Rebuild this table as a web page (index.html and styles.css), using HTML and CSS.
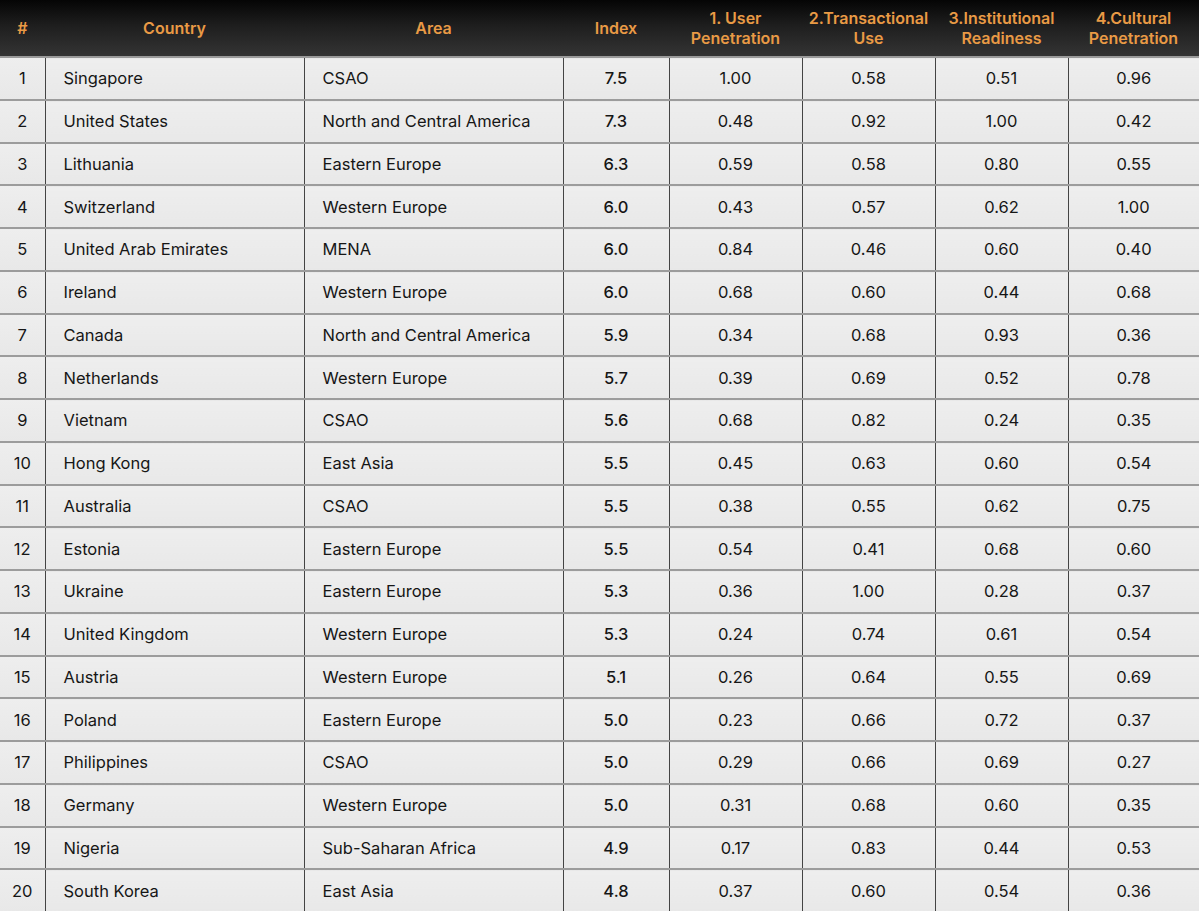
FILE: index.html
```html
<!DOCTYPE html>
<html>
<head>
<meta charset="utf-8">
<link rel="stylesheet" href="styles.css">
</head>
<body>
<table class="rank">
<colgroup>
<col class="c-num"><col class="c-country"><col class="c-area"><col class="c-index"><col class="c-m"><col class="c-m"><col class="c-m"><col class="c-last">
</colgroup>
<thead>
<tr>
<th>#</th><th>Country</th><th>Area</th><th>Index</th><th>1. User<br>Penetration</th><th>2.Transactional<br>Use</th><th>3.Institutional<br>Readiness</th><th>4.Cultural<br>Penetration</th>
</tr>
</thead>
<tbody>
<tr><td>1</td><td class="l">Singapore</td><td class="l">CSAO</td><td class="idx">7.5</td><td>1.00</td><td>0.58</td><td>0.51</td><td>0.96</td></tr>
<tr><td>2</td><td class="l">United States</td><td class="l">North and Central America</td><td class="idx">7.3</td><td>0.48</td><td>0.92</td><td>1.00</td><td>0.42</td></tr>
<tr><td>3</td><td class="l">Lithuania</td><td class="l">Eastern Europe</td><td class="idx">6.3</td><td>0.59</td><td>0.58</td><td>0.80</td><td>0.55</td></tr>
<tr><td>4</td><td class="l">Switzerland</td><td class="l">Western Europe</td><td class="idx">6.0</td><td>0.43</td><td>0.57</td><td>0.62</td><td>1.00</td></tr>
<tr><td>5</td><td class="l">United Arab Emirates</td><td class="l">MENA</td><td class="idx">6.0</td><td>0.84</td><td>0.46</td><td>0.60</td><td>0.40</td></tr>
<tr><td>6</td><td class="l">Ireland</td><td class="l">Western Europe</td><td class="idx">6.0</td><td>0.68</td><td>0.60</td><td>0.44</td><td>0.68</td></tr>
<tr><td>7</td><td class="l">Canada</td><td class="l">North and Central America</td><td class="idx">5.9</td><td>0.34</td><td>0.68</td><td>0.93</td><td>0.36</td></tr>
<tr><td>8</td><td class="l">Netherlands</td><td class="l">Western Europe</td><td class="idx">5.7</td><td>0.39</td><td>0.69</td><td>0.52</td><td>0.78</td></tr>
<tr><td>9</td><td class="l">Vietnam</td><td class="l">CSAO</td><td class="idx">5.6</td><td>0.68</td><td>0.82</td><td>0.24</td><td>0.35</td></tr>
<tr><td>10</td><td class="l">Hong Kong</td><td class="l">East Asia</td><td class="idx">5.5</td><td>0.45</td><td>0.63</td><td>0.60</td><td>0.54</td></tr>
<tr><td>11</td><td class="l">Australia</td><td class="l">CSAO</td><td class="idx">5.5</td><td>0.38</td><td>0.55</td><td>0.62</td><td>0.75</td></tr>
<tr><td>12</td><td class="l">Estonia</td><td class="l">Eastern Europe</td><td class="idx">5.5</td><td>0.54</td><td>0.41</td><td>0.68</td><td>0.60</td></tr>
<tr><td>13</td><td class="l">Ukraine</td><td class="l">Eastern Europe</td><td class="idx">5.3</td><td>0.36</td><td>1.00</td><td>0.28</td><td>0.37</td></tr>
<tr><td>14</td><td class="l">United Kingdom</td><td class="l">Western Europe</td><td class="idx">5.3</td><td>0.24</td><td>0.74</td><td>0.61</td><td>0.54</td></tr>
<tr><td>15</td><td class="l">Austria</td><td class="l">Western Europe</td><td class="idx">5.1</td><td>0.26</td><td>0.64</td><td>0.55</td><td>0.69</td></tr>
<tr><td>16</td><td class="l">Poland</td><td class="l">Eastern Europe</td><td class="idx">5.0</td><td>0.23</td><td>0.66</td><td>0.72</td><td>0.37</td></tr>
<tr><td>17</td><td class="l">Philippines</td><td class="l">CSAO</td><td class="idx">5.0</td><td>0.29</td><td>0.66</td><td>0.69</td><td>0.27</td></tr>
<tr><td>18</td><td class="l">Germany</td><td class="l">Western Europe</td><td class="idx">5.0</td><td>0.31</td><td>0.68</td><td>0.60</td><td>0.35</td></tr>
<tr><td>19</td><td class="l">Nigeria</td><td class="l">Sub-Saharan Africa</td><td class="idx">4.9</td><td>0.17</td><td>0.83</td><td>0.44</td><td>0.53</td></tr>
<tr><td>20</td><td class="l">South Korea</td><td class="l">East Asia</td><td class="idx">4.8</td><td>0.37</td><td>0.60</td><td>0.54</td><td>0.36</td></tr>
</tbody>
</table>
</body>
</html>
```
FILE: styles.css
```css
html, body {
  margin: 0;
  padding: 0;
  background: #ebebeb;
}
body {
  font-family: Inter, "Noto Sans", sans-serif;
  width: 1199px;
  height: 911px;
  overflow: hidden;
}
.rank {
  width: 1199px;
  border-collapse: collapse;
  table-layout: fixed;
}
.c-num { width: 45px; }
.c-country { width: 259px; }
.c-area { width: 259px; }
.c-index { width: 106px; }
.c-m { width: 133px; }
.c-last { width: 131px; }
.rank th {
  height: 56px;
  padding: 0;
  background: linear-gradient(to bottom, #050505 0%, #1e1e1e 45%, #343434 100%);
  color: #e99a45;
  font-weight: 600;
  font-size: 16px;
  line-height: 20px;
  text-align: center;
  border-bottom: 2px solid #9a9a9a;
}
.rank td {
  height: 40.75px;
  padding: 0;
  font-size: 16.5px;
  color: #161616;
  text-align: center;
  background: linear-gradient(to bottom, #eeeeee, #e8e8e8);
  border-bottom: 2px solid #9c9c9c;
  border-left: 1.5px solid #444;
}
.rank td:first-child { border-left: none; }
.rank td.l {
  text-align: left;
  padding-left: 18px;
}
.rank td.idx {
  font-weight: 500;
}
```
